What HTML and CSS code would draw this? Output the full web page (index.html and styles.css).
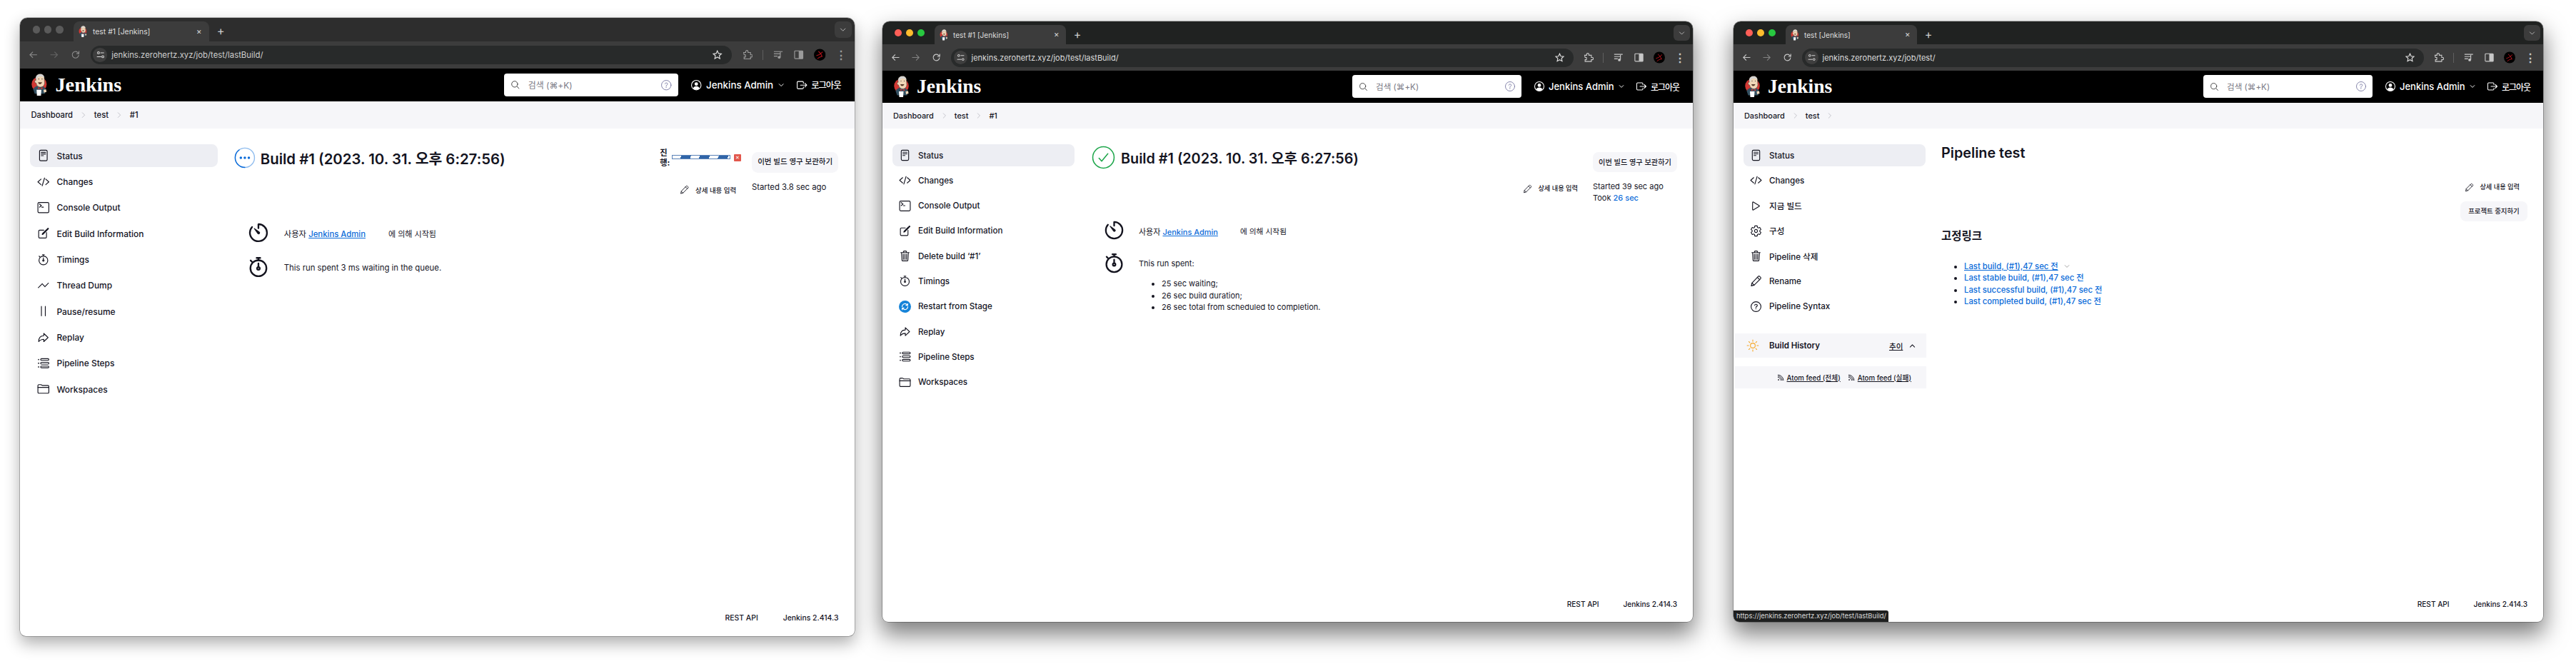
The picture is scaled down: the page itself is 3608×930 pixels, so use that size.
FILE: index.html
```html
<!DOCTYPE html>
<html lang="ko">
<head>
<meta charset="utf-8">
<title>Jenkins</title>
<link rel="stylesheet" href="styles.css">
</head>
<body>
<svg class="defs" xmlns="http://www.w3.org/2000/svg" aria-hidden="true">
  <symbol id="logo" viewBox="0 0 44 62">
    <circle cx="21" cy="29" r="20.5" fill="#d33833"/>
    <path d="M5 43c3-7 9-10 17-10s14 3 17 10l-2 12H9z" fill="#335061"/>
    <path d="M12 10c1-6 6-9 12-9s11 4 11 11c0 5 1 9 1 13 0 7-5 12-11 12S14 33 13 26c-3 0-4-3-4-5s2-3 3-2z" fill="#f0d6b7" stroke="#3a3a3a" stroke-width="1"/>
    <path d="M12 13c0-7 6-11 12-11s11 4 11 10c-3-4-8-5-13-4-3 1-5 2-6 5l-1 5z" fill="#d5d5d5"/>
    <path d="M18 24h11c-1 3-3 5-6 5s-4-2-5-5z" fill="#5b3b2a"/>
    <circle cx="20" cy="15" r="1.2" fill="#222"/><circle cx="29" cy="15" r="1.2" fill="#222"/>
    <path d="M18 37l6 3 6-3v6l-6-3-6 3z" fill="#d33833"/>
    <path d="M14 44h13l-1 16H15z" fill="#fff"/>
    <path d="M33 44l7-1 1 7-7 2z" fill="#f0d6b7"/>
  </symbol>
  <symbol id="i-doc" viewBox="0 0 512 512"><rect x="100" y="40" width="312" height="432" rx="48"/><path d="M168 128h176M168 196h176M168 264h88"/></symbol>
  <symbol id="i-code" viewBox="0 0 512 512"><path d="M160 368L32 256l128-112M352 368l128-112-128-112M304 96l-96 320"/></symbol>
  <symbol id="i-term" viewBox="0 0 512 512"><rect x="32" y="48" width="448" height="416" rx="48"/><path d="M96 112l80 64-80 64M192 240h64"/></symbol>
  <symbol id="i-edit" viewBox="0 0 512 512"><path d="M384 224v184a40 40 0 01-40 40H104a40 40 0 01-40-40V168a40 40 0 0140-40h167.48"/><path d="M459.94 53.25a16.06 16.06 0 00-23.22-.56L424.35 65a8 8 0 000 11.31l11.34 11.32a8 8 0 0011.34 0l12.06-12c6.1-6.09 6.67-16.01.85-22.38zM399.34 90L218.82 270.2a9 9 0 00-2.31 3.93L208.16 299a3.91 3.91 0 004.86 4.86l24.85-8.35a9 9 0 003.93-2.31L422 112.66a9 9 0 000-12.66l-9.95-10a9.06 9.06 0 00-12.71 0z"/></symbol>
  <symbol id="i-watch" viewBox="0 0 512 512"><circle cx="256" cy="284" r="180"/><path d="M256 104V60M216 52h80M112 140l-30-30"/><path d="M256 176v80"/><circle cx="256" cy="288" r="30"/></symbol>
  <symbol id="i-timer" viewBox="0 0 512 512"><path d="M112.91 128A191.85 191.85 0 0064 254c-1.18 106.35 85.65 193.8 192 194 106.2.2 192-85.83 192-192 0-104.54-83.55-189.61-187.5-192a4.36 4.36 0 00-4.5 4.37V152"/><path class="solid" d="M233.38 278.63l-79-113a8.13 8.13 0 0111.32-11.32l113 79a32.5 32.5 0 01-37.25 53.26 33.21 33.21 0 01-8-7.94z"/></symbol>
  <symbol id="i-thread" viewBox="0 0 512 512"><path d="M344 280l88-88M232 216l64 64M80 320l104-104"/><g class="solid"><circle cx="456" cy="168" r="24"/><circle cx="320" cy="304" r="24"/><circle cx="208" cy="192" r="24"/><circle cx="56" cy="344" r="24"/></g></symbol>
  <symbol id="i-pause" viewBox="0 0 512 512"><path d="M176 64v384M336 64v384"/></symbol>
  <symbol id="i-replay" viewBox="0 0 512 512"><path d="M448 256L272 88v96C103.57 184 64 304.77 64 424c48.61-62.24 91.6-96 208-96v96z"/></symbol>
  <symbol id="i-steps" viewBox="0 0 512 512"><g class="solid"><circle cx="60" cy="104" r="26"/><circle cx="60" cy="256" r="26"/><circle cx="60" cy="408" r="26"/></g><rect x="144" y="68" width="336" height="72" rx="36"/><rect x="144" y="220" width="336" height="72" rx="36"/><rect x="144" y="372" width="336" height="72" rx="36"/></symbol>
  <symbol id="i-folder" viewBox="0 0 512 512"><path d="M440 432H72a40 40 0 01-40-40V120a40 40 0 0140-40h75.89a40 40 0 0122.19 6.72l27.84 18.56a40 40 0 0022.19 6.72H440a40 40 0 0140 40v240a40 40 0 01-40 40z"/><path d="M32 192h448"/></symbol>
  <symbol id="i-trash" viewBox="0 0 512 512"><path d="M112 112l20 320c.95 18.49 14.4 32 32 32h184c17.67 0 30.87-13.51 32-32l20-320M80 112h352M192 112V72a23.93 23.93 0 0124-24h80a23.93 23.93 0 0124 24v40M256 176v224M184 176l8 224M328 176l-8 224"/></symbol>
  <symbol id="i-play" viewBox="0 0 512 512"><path d="M112 111v290c0 17.44 17 28.52 31 20.16l247.9-148.37c12.12-7.25 12.12-26.33 0-33.58L143 90.84c-14-8.36-31 2.72-31 20.16z"/></symbol>
  <symbol id="i-gear" viewBox="0 0 512 512"><path d="M262.29 192.31a64 64 0 1057.4 57.4 64.13 64.13 0 00-57.4-57.4zM416.39 256a154.34 154.34 0 01-1.53 20.79l45.21 35.46a10.81 10.81 0 012.45 13.75l-42.77 74a10.81 10.81 0 01-13.14 4.59l-44.9-18.08a16.11 16.11 0 00-15.17 1.75A164.48 164.48 0 01325 400.8a15.94 15.94 0 00-8.82 12.14l-6.73 47.89a11.08 11.08 0 01-10.68 9.17h-85.54a11.11 11.11 0 01-10.69-8.87l-6.72-47.82a16.07 16.07 0 00-9-12.22 155.3 155.3 0 01-21.46-12.57 16 16 0 00-15.11-1.71l-44.89 18.07a10.81 10.81 0 01-13.14-4.58l-42.77-74a10.8 10.8 0 012.45-13.75l38.21-30a16.05 16.05 0 006-14.08c-.36-4.17-.58-8.33-.58-12.5s.21-8.27.58-12.35a16 16 0 00-6.07-13.94l-38.19-30A10.81 10.81 0 0149.48 186l42.77-74a10.81 10.81 0 0113.14-4.59l44.9 18.08a16.11 16.11 0 0015.17-1.75A164.48 164.48 0 01187 111.2a15.94 15.94 0 008.82-12.14l6.73-47.89A11.08 11.08 0 01213.23 42h85.54a11.11 11.11 0 0110.69 8.87l6.72 47.82a16.07 16.07 0 009 12.22 155.3 155.3 0 0121.46 12.57 16 16 0 0015.11 1.71l44.89-18.07a10.81 10.81 0 0113.14 4.58l42.77 74a10.8 10.8 0 01-2.45 13.75l-38.21 30a16.05 16.05 0 00-6.05 14.08c.33 4.14.55 8.3.55 12.47z"/></symbol>
  <symbol id="i-pencil" viewBox="0 0 512 512"><path d="M352 64a40 40 0 0156 0l40 40a40 40 0 010 56L176 432 56 464l32-120z"/><path d="M312 104l96 96M88 344l88 88"/></symbol>
  <symbol id="i-help" viewBox="0 0 512 512"><circle cx="256" cy="256" r="208"/><path d="M200 202.29s.84-17.5 19.57-32.57C230.68 160.77 244 158.18 256 158c10.93-.14 20.69 1.67 26.53 4.45 10 4.76 29.47 16.38 29.47 41.09 0 26-17 37.81-36.37 50.8S251 281.43 251 296"/><circle class="solid" cx="250" cy="348" r="20"/></symbol>
  <symbol id="i-logout" viewBox="0 0 512 512"><path d="M320 176v-40a40 40 0 00-40-40H88a40 40 0 00-40 40v240a40 40 0 0040 40h192a40 40 0 0040-40v-40M384 176l80 80-80 80M191 256h273"/></symbol>
  <symbol id="i-user" viewBox="0 0 512 512"><circle cx="256" cy="256" r="208"/><circle class="solid" cx="256" cy="206" r="76"/><path class="solid" d="M116 396c20-60 76-90 140-90s120 30 140 90c-36 40-86 60-140 60s-104-20-140-60z"/></symbol>
  <symbol id="i-search" viewBox="0 0 512 512"><circle cx="224" cy="224" r="160"/><path d="M344 344l112 112"/></symbol>
  <symbol id="i-down" viewBox="0 0 512 512"><path d="M112 184l144 144 144-144"/></symbol>
  <symbol id="i-up" viewBox="0 0 512 512"><path d="M112 328l144-144 144 144"/></symbol>
  <symbol id="i-right" viewBox="0 0 512 512"><path d="M184 72l184 184-184 184"/></symbol>
  <symbol id="i-check" viewBox="0 0 512 512"><circle cx="256" cy="256" r="232"/><path d="M352 176L217.6 336 160 272"/></symbol>
  <symbol id="i-run" viewBox="0 0 512 512"><circle class="run-track" cx="256" cy="256" r="232"/><path class="run-arc" d="M256 488A232 232 0 0124 256 232 232 0 01120 68"/><g class="run-dots"><circle cx="160" cy="256" r="30"/><circle cx="256" cy="256" r="30"/><circle cx="352" cy="256" r="30"/></g></symbol>
  <symbol id="i-restart" viewBox="0 0 512 512"><circle class="restart-bg" cx="256" cy="256" r="256"/><path class="restart-fg" d="M136 256a120 120 0 01204-86l30 30M376 256a120 120 0 01-204 86l-30-30M372 130v72h-72M140 382v-72h72"/></symbol>
  <symbol id="i-sun" viewBox="0 0 512 512"><circle cx="256" cy="256" r="96"/><path d="M256 32v60M256 420v60M32 256h60M420 256h60M98 98l40 40M374 374l40 40M98 414l40-40M374 138l40-40"/></symbol>
  <symbol id="i-rss" viewBox="0 0 512 512"><circle class="solid" cx="96" cy="416" r="40"/><path d="M64 256a192 192 0 01192 192M64 96a352 352 0 01352 352M64 176a272 272 0 01272 272"/></symbol>
  <symbol id="c-back" viewBox="0 0 24 24"><path d="M20 12H5M11 5.5L4.5 12l6.5 6.5"/></symbol>
  <symbol id="c-fwd" viewBox="0 0 24 24"><path d="M4 12h15M13 5.5l6.5 6.5-6.500 6.500"/></symbol>
  <symbol id="c-reload" viewBox="0 0 24 24"><path d="M19 12a7 7 0 11-2.200-5.100L19.500 9.500M19.500 4v5.500H14"/></symbol>
  <symbol id="c-tune" viewBox="0 0 24 24"><circle cx="7" cy="7" r="2.500"/><path d="M12 7h9M3 17h11"/><circle cx="18" cy="17" r="2.500"/></symbol>
  <symbol id="c-star" viewBox="0 0 24 24"><path d="M12 3.500l2.600 5.700 6.200.700-4.600 4.200 1.300 6.100-5.500-3.100-5.500 3.100 1.300-6.100-4.600-4.200 6.200-.700z"/></symbol>
  <symbol id="c-ext" viewBox="0 0 24 24"><path d="M4 7h4.500V5a2.500 2.500 0 015 0v2H19v5h2a2.500 2.500 0 010 5h-2v4H5v-4h3v-5H5z"/></symbol>
  <symbol id="c-media" viewBox="0 0 24 24"><path d="M3 5h14M3 10h14M3 15h8M17 6v11"/><circle class="solid" cx="14.500" cy="17.500" r="3"/><path d="M17 5h5"/></symbol>
  <symbol id="c-side" viewBox="0 0 24 24"><rect x="3" y="3.500" width="18" height="17" rx="1.500"/><rect class="solid" x="12" y="3.500" width="9" height="17"/></symbol>
  <symbol id="c-avatar" viewBox="0 0 24 24"><circle class="av-bg" cx="12" cy="12" r="12"/><path class="av-fg" d="M5 14c4-1 9-4 13-8M9 5c3 2 6 6 8 11M7 20c3-3 6-4 10-5"/></symbol>
</svg>

<main class="desk">

<!-- Window 1: running build, unfocused -->
<section class="win win-a">
  <div class="strip">
    <div class="lights"><i class="light"></i><i class="light"></i><i class="light"></i></div>
    <div class="tab"><svg class="fav"><use href="#logo"/></svg><span class="tab-title">test #1 [Jenkins]</span><span class="tab-x">✕</span></div>
    <span class="tab-new">+</span>
    <span class="tab-menu"><svg class="ic ic-tm"><use href="#i-down"/></svg></span>
  </div>
  <div class="toolbar">
    <span class="nav"><svg class="chr"><use href="#c-back"/></svg></span>
    <span class="nav off"><svg class="chr"><use href="#c-fwd"/></svg></span>
    <span class="nav"><svg class="chr"><use href="#c-reload"/></svg></span>
    <div class="omni"><span class="tune"><svg class="chr chr-s"><use href="#c-tune"/></svg></span><span class="url">jenkins.zerohertz.xyz/job/test/lastBuild/</span><svg class="chr star"><use href="#c-star"/></svg></div>
    <span class="tb ext"><svg class="chr"><use href="#c-ext"/></svg></span><span class="sep"></span>
    <span class="tb"><svg class="chr"><use href="#c-media"/></svg></span>
    <span class="tb"><svg class="chr"><use href="#c-side"/></svg></span>
    <span class="tb"><svg class="avatar"><use href="#c-avatar"/></svg></span>
    <span class="tb dots">⋮</span>
  </div>
  <header class="jhead">
    <svg class="logo"><use href="#logo"/></svg><span class="brand">Jenkins</span>
    <div class="search"><svg class="ic ic-s"><use href="#i-search"/></svg><span class="ph">검색 (⌘+K)</span><svg class="ic ic-q"><use href="#i-help"/></svg></div>
    <svg class="ic ic-u"><use href="#i-user"/></svg><span class="uname">Jenkins Admin</span><svg class="ic ic-d"><use href="#i-down"/></svg>
    <svg class="ic ic-l"><use href="#i-logout"/></svg><span class="lout">로그아웃</span>
  </header>
  <nav class="crumbs"><span>Dashboard</span><svg class="ic cr"><use href="#i-right"/></svg><span>test</span><svg class="ic cr"><use href="#i-right"/></svg><span>#1</span></nav>
  <div class="page">
    <aside class="side">
      <ul class="tasks">
        <li class="task on"><svg class="ic"><use href="#i-doc"/></svg>Status</li>
        <li class="task"><svg class="ic"><use href="#i-code"/></svg>Changes</li>
        <li class="task"><svg class="ic"><use href="#i-term"/></svg>Console Output</li>
        <li class="task"><svg class="ic"><use href="#i-edit"/></svg>Edit Build Information</li>
        <li class="task"><svg class="ic"><use href="#i-watch"/></svg>Timings</li>
        <li class="task"><svg class="ic"><use href="#i-thread"/></svg>Thread Dump</li>
        <li class="task"><svg class="ic"><use href="#i-pause"/></svg>Pause/resume</li>
        <li class="task"><svg class="ic"><use href="#i-replay"/></svg>Replay</li>
        <li class="task"><svg class="ic"><use href="#i-steps"/></svg>Pipeline Steps</li>
        <li class="task"><svg class="ic"><use href="#i-folder"/></svg>Workspaces</li>
      </ul>
    </aside>
    <div class="content">
      <div class="head">
        <h1 class="title"><svg class="ic st st-run"><use href="#i-run"/></svg>Build #1 (2023. 10. 31. 오후 6:27:56)</h1>
        <div class="meta">
          <div class="prog"><span class="prog-l">진행:</span><span class="bar"></span><span class="stop">✕</span></div>
          <span class="keep">이번 빌드 영구 보관하기</span>
          <span class="desc"><svg class="ic ic-p"><use href="#i-pencil"/></svg>상세 내용 입력</span>
          <div class="times"><div>Started 3.8 sec ago</div></div>
        </div>
      </div>
      <div class="info"><svg class="ic big"><use href="#i-timer"/></svg><span>사용자 <a class="lnk">Jenkins Admin</a></span><span class="by">에 의해 시작됨</span></div>
      <div class="info info-2"><svg class="ic big"><use href="#i-watch"/></svg><span>This run spent 3 ms waiting in the queue.</span></div>
    </div>
  </div>
  <footer class="foot"><span>REST API</span><span>Jenkins 2.414.3</span></footer>
</section>

<!-- Window 2: finished build -->
<section class="win win-b act">
  <div class="strip">
    <div class="lights"><i class="light r"></i><i class="light y"></i><i class="light g"></i></div>
    <div class="tab"><svg class="fav"><use href="#logo"/></svg><span class="tab-title">test #1 [Jenkins]</span><span class="tab-x">✕</span></div>
    <span class="tab-new">+</span>
    <span class="tab-menu"><svg class="ic ic-tm"><use href="#i-down"/></svg></span>
  </div>
  <div class="toolbar">
    <span class="nav"><svg class="chr"><use href="#c-back"/></svg></span>
    <span class="nav off"><svg class="chr"><use href="#c-fwd"/></svg></span>
    <span class="nav"><svg class="chr"><use href="#c-reload"/></svg></span>
    <div class="omni"><span class="tune"><svg class="chr chr-s"><use href="#c-tune"/></svg></span><span class="url">jenkins.zerohertz.xyz/job/test/lastBuild/</span><svg class="chr star"><use href="#c-star"/></svg></div>
    <span class="tb ext"><svg class="chr"><use href="#c-ext"/></svg></span><span class="sep"></span>
    <span class="tb"><svg class="chr"><use href="#c-media"/></svg></span>
    <span class="tb"><svg class="chr"><use href="#c-side"/></svg></span>
    <span class="tb"><svg class="avatar"><use href="#c-avatar"/></svg></span>
    <span class="tb dots">⋮</span>
  </div>
  <header class="jhead">
    <svg class="logo"><use href="#logo"/></svg><span class="brand">Jenkins</span>
    <div class="search"><svg class="ic ic-s"><use href="#i-search"/></svg><span class="ph">검색 (⌘+K)</span><svg class="ic ic-q"><use href="#i-help"/></svg></div>
    <svg class="ic ic-u"><use href="#i-user"/></svg><span class="uname">Jenkins Admin</span><svg class="ic ic-d"><use href="#i-down"/></svg>
    <svg class="ic ic-l"><use href="#i-logout"/></svg><span class="lout">로그아웃</span>
  </header>
  <nav class="crumbs"><span>Dashboard</span><svg class="ic cr"><use href="#i-right"/></svg><span>test</span><svg class="ic cr"><use href="#i-right"/></svg><span>#1</span></nav>
  <div class="page">
    <aside class="side">
      <ul class="tasks">
        <li class="task on"><svg class="ic"><use href="#i-doc"/></svg>Status</li>
        <li class="task"><svg class="ic"><use href="#i-code"/></svg>Changes</li>
        <li class="task"><svg class="ic"><use href="#i-term"/></svg>Console Output</li>
        <li class="task"><svg class="ic"><use href="#i-edit"/></svg>Edit Build Information</li>
        <li class="task"><svg class="ic"><use href="#i-trash"/></svg>Delete build ‘#1’</li>
        <li class="task"><svg class="ic"><use href="#i-watch"/></svg>Timings</li>
        <li class="task"><svg class="ic ic-fill"><use href="#i-restart"/></svg>Restart from Stage</li>
        <li class="task"><svg class="ic"><use href="#i-replay"/></svg>Replay</li>
        <li class="task"><svg class="ic"><use href="#i-steps"/></svg>Pipeline Steps</li>
        <li class="task"><svg class="ic"><use href="#i-folder"/></svg>Workspaces</li>
      </ul>
    </aside>
    <div class="content">
      <div class="head">
        <h1 class="title"><svg class="ic st st-ok"><use href="#i-check"/></svg>Build #1 (2023. 10. 31. 오후 6:27:56)</h1>
        <div class="meta">
          <span class="meta-gap"></span>
          <span class="keep">이번 빌드 영구 보관하기</span>
          <span class="desc"><svg class="ic ic-p"><use href="#i-pencil"/></svg>상세 내용 입력</span>
          <div class="times"><div>Started 39 sec ago</div><div>Took <a class="lnk plain">26 sec</a></div></div>
        </div>
      </div>
      <div class="info"><svg class="ic big"><use href="#i-timer"/></svg><span>사용자 <a class="lnk">Jenkins Admin</a></span><span class="by">에 의해 시작됨</span></div>
      <div class="info info-2"><svg class="ic big"><use href="#i-watch"/></svg><div><div>This run spent:</div>
        <ul class="spent"><li>25 sec waiting;</li><li>26 sec build duration;</li><li>26 sec total from scheduled to completion.</li></ul></div></div>
    </div>
  </div>
  <footer class="foot"><span>REST API</span><span>Jenkins 2.414.3</span></footer>
</section>

<!-- Window 3: job page -->
<section class="win win-c act">
  <div class="strip">
    <div class="lights"><i class="light r"></i><i class="light y"></i><i class="light g"></i></div>
    <div class="tab"><svg class="fav"><use href="#logo"/></svg><span class="tab-title">test [Jenkins]</span><span class="tab-x">✕</span></div>
    <span class="tab-new">+</span>
    <span class="tab-menu"><svg class="ic ic-tm"><use href="#i-down"/></svg></span>
  </div>
  <div class="toolbar">
    <span class="nav"><svg class="chr"><use href="#c-back"/></svg></span>
    <span class="nav off"><svg class="chr"><use href="#c-fwd"/></svg></span>
    <span class="nav"><svg class="chr"><use href="#c-reload"/></svg></span>
    <div class="omni"><span class="tune"><svg class="chr chr-s"><use href="#c-tune"/></svg></span><span class="url">jenkins.zerohertz.xyz/job/test/</span><svg class="chr star"><use href="#c-star"/></svg></div>
    <span class="tb ext"><svg class="chr"><use href="#c-ext"/></svg></span><span class="sep"></span>
    <span class="tb"><svg class="chr"><use href="#c-media"/></svg></span>
    <span class="tb"><svg class="chr"><use href="#c-side"/></svg></span>
    <span class="tb"><svg class="avatar"><use href="#c-avatar"/></svg></span>
    <span class="tb dots">⋮</span>
  </div>
  <header class="jhead">
    <svg class="logo"><use href="#logo"/></svg><span class="brand">Jenkins</span>
    <div class="search"><svg class="ic ic-s"><use href="#i-search"/></svg><span class="ph">검색 (⌘+K)</span><svg class="ic ic-q"><use href="#i-help"/></svg></div>
    <svg class="ic ic-u"><use href="#i-user"/></svg><span class="uname">Jenkins Admin</span><svg class="ic ic-d"><use href="#i-down"/></svg>
    <svg class="ic ic-l"><use href="#i-logout"/></svg><span class="lout">로그아웃</span>
  </header>
  <nav class="crumbs"><span>Dashboard</span><svg class="ic cr"><use href="#i-right"/></svg><span>test</span><svg class="ic cr"><use href="#i-right"/></svg></nav>
  <div class="page">
    <aside class="side">
      <ul class="tasks">
        <li class="task on"><svg class="ic"><use href="#i-doc"/></svg>Status</li>
        <li class="task"><svg class="ic"><use href="#i-code"/></svg>Changes</li>
        <li class="task"><svg class="ic"><use href="#i-play"/></svg>지금 빌드</li>
        <li class="task"><svg class="ic"><use href="#i-gear"/></svg>구성</li>
        <li class="task"><svg class="ic"><use href="#i-trash"/></svg>Pipeline 삭제</li>
        <li class="task"><svg class="ic"><use href="#i-pencil"/></svg>Rename</li>
        <li class="task"><svg class="ic"><use href="#i-help"/></svg>Pipeline Syntax</li>
      </ul>
      <div class="hist">
        <svg class="ic ic-sun"><use href="#i-sun"/></svg><span class="hist-t">Build History</span><a class="trend">추이</a><svg class="ic ic-up"><use href="#i-up"/></svg>
      </div>
      <div class="feeds">
        <svg class="ic ic-rss"><use href="#i-rss"/></svg><a class="feed">Atom feed (전체)</a>
        <svg class="ic ic-rss"><use href="#i-rss"/></svg><a class="feed">Atom feed (실패)</a>
      </div>
    </aside>
    <div class="content">
      <div class="head head-job">
        <h1 class="title title-job">Pipeline test</h1>
        <div class="job-side">
          <span class="desc"><svg class="ic ic-p"><use href="#i-pencil"/></svg>상세 내용 입력</span>
          <span class="keep keep-job">프로젝트 중지하기</span>
        </div>
      </div>
      <h2 class="perma">고정링크</h2>
      <ul class="links">
        <li><a class="lnk hov">Last build, (#1),47 sec 전</a><svg class="ic ic-ld"><use href="#i-down"/></svg></li>
        <li><a class="lnk plain">Last stable build, (#1),47 sec 전</a></li>
        <li><a class="lnk plain">Last successful build, (#1),47 sec 전</a></li>
        <li><a class="lnk plain">Last completed build, (#1),47 sec 전</a></li>
      </ul>
    </div>
  </div>
  <footer class="foot"><span>REST API</span><span>Jenkins 2.414.3</span></footer>
  <div class="status-url">https://jenkins.zerohertz.xyz/job/test/lastBuild/</div>
</section>

</main>
</body>
</html>
```

FILE: styles.css
```css
* { box-sizing: border-box; }
html, body { margin: 0; padding: 0; background: #fff; }
body { width: 3608px; height: 930px; overflow: hidden; font-family: Inter, "Noto Sans CJK KR", sans-serif; color: #14141f; }
.defs { width: 0; height: 0; display: block; overflow: hidden; }
.desk { display: block; width: 3608px; height: 930px; position: relative; }

/* windows on the desktop */
.win { position: absolute; width: 1135px; height: 841px; display: flex; flex-direction: column; background: #fff; border-radius: 10px 10px 8px 8px; overflow: hidden; }
.win-a { left: 27.2px; top: 24.3px; zoom: 1.03; box-shadow: 0 0 0 .5px rgba(0,0,0,.45), 0 9px 22px rgba(0,0,0,.32); }
.win-b { left: 1236px; top: 30px; }
.win-c { left: 2428px; top: 30px; width: 1134px; }
.act { box-shadow: 0 0 0 .5px rgba(0,0,0,.5), 0 16px 32px 2px rgba(0,0,0,.5); }

/* browser chrome */
.strip { height: 32px; flex: none; display: flex; align-items: flex-end; background: #2d2d2d; position: relative; }
.act .strip { background: #202221; }
.lights { width: 73px; height: 32px; flex: none; display: flex; align-items: center; gap: 6px; padding-left: 17px; }
.light { width: 10px; height: 10px; border-radius: 50%; background: #5a5a5a; display: block; }
.light.r { background: #ff5f57; }
.light.y { background: #febc2e; }
.light.g { background: #28c840; }
.tab { width: 184px; height: 27px; display: flex; align-items: center; background: #3c3c3c; border-radius: 8px 8px 0 0; padding-left: 7px; color: #dedede; font-size: 10.1px; }
.fav { width: 12px; height: 16px; flex: none; margin-right: 7px; }
.tab-title { flex: 1; white-space: nowrap; }
.tab-x { width: 26px; text-align: center; font-size: 9px; color: #ddd; }
.tab-new { width: 32px; height: 27px; text-align: center; line-height: 27px; font-size: 16px; color: #ccc; }
.tab-menu { position: absolute; right: 4px; top: 5px; width: 23px; height: 22px; border-radius: 6px; background: #3c3c3c; display: flex; align-items: center; justify-content: center; }
.ic-tm { width: 11px; height: 11px; color: #ddd; stroke-width: 56; }
.toolbar { height: 37px; flex: none; display: flex; align-items: center; background: #3c3c3c; padding: 0 4px; color: #c7c7c7; }
.win-a .toolbar { color: #8a8a8a; }
.nav { width: 28.5px; flex: none; display: flex; justify-content: center; }
.nav.off { opacity: .5; }
.chr { width: 15px; height: 15px; fill: none; stroke: currentColor; stroke-width: 1.8; }
.chr .solid, .chr-s .solid { fill: currentColor; stroke: none; }
.chr-s { width: 13px; height: 13px; }
.omni { flex: 1; height: 26px; margin-left: 6.5px; background: #282a2a; border-radius: 13px; display: flex; align-items: center; padding: 0 12px 0 3.5px; }
.tune { width: 19px; height: 19px; border-radius: 50%; background: #3e3e3e; display: flex; align-items: center; justify-content: center; color: #ddd; }
.url { margin-left: 6px; flex: 1; font-size: 11px; color: #dcdcdc; white-space: nowrap; }
.win-a .url { color: #cfcfcf; }
.star { color: #e0e0e0; }
.tb { width: 28.7px; flex: none; display: flex; justify-content: center; color: #c7c7c7; }
.win-a .tb { color: #9a9a9a; }
.ext { margin-left: 7px; }
.sep { width: 1px; height: 14px; background: #5f5f5f; margin: 0 6px; flex: none; }
.avatar { width: 16px; height: 17px; }
.av-bg { fill: #000; }
.av-fg { fill: none; stroke: #b1121a; stroke-width: 1.5; }
.dots { font-size: 16px; line-height: 16px; font-weight: 700; }

/* Jenkins header */
.jhead { height: 44.5px; flex: none; display: flex; align-items: center; background: #000; padding: 0 16px; color: #fff; }
.logo { width: 22px; height: 31px; flex: none; }
.brand { margin-left: 10px; width: 610px; flex: none; font: 700 27.5px "Liberation Serif", serif; }
.search { width: 237px; height: 32px; flex: none; margin-right: 17px; background: #fff; border-radius: 4px; display: flex; align-items: center; color: #7a7a85; font-size: 11.6px; padding: 0 8px 0 9px; }
.ph { flex: 1; margin-left: 11px; }
.ic { fill: none; stroke: currentColor; stroke-width: 34; stroke-linecap: round; stroke-linejoin: round; flex: none; }
.ic .solid, .solid { fill: currentColor; stroke: none; }
.ic-s { width: 13px; height: 13px; color: #333; }
.ic-q { width: 16px; height: 16px; color: #6b6b99; stroke-width: 26; }
.ic-u { width: 16px; height: 16px; color: #fff; }
.uname { margin-left: 5px; font-size: 13px; font-weight: 500; white-space: nowrap; width: 90px; }
.ic-d { width: 10px; height: 10px; margin-left: 7px; stroke-width: 48; }
.ic-l { width: 16px; height: 16px; margin-left: 15px; }
.lout { margin-left: 5px; font-size: 12px; letter-spacing: -1px; font-weight: 500; white-space: nowrap; }

/* breadcrumb */
.crumbs { height: 36.5px; flex: none; display: flex; align-items: center; background: #f6f6f9; padding-left: 15px; font-size: 10.9px; font-weight: 450; }
.cr { width: 9px; height: 10px; margin: 0 10px; color: #9a9aa5; stroke-width: 30; }

/* page */
.page { flex: 1; display: flex; min-height: 0; }
.side { width: 269px; flex: none; padding: 22px 0 0 14px; }
.tasks { list-style: none; margin: 0; padding: 0; display: flex; flex-direction: column; gap: 4.3px; }
.task { height: 31px; display: flex; align-items: center; gap: 10px; padding-left: 9px; border-radius: 8px; font-size: 11.6px; font-weight: 450; white-space: nowrap; color: #14141f; }
.task.on { background: #edeef3; }
.task .ic { width: 17px; height: 17px; }
.restart-bg { fill: #1583d8; stroke: none; }
.restart-fg { stroke: #fff; stroke-width: 36; fill: none; }
.content { flex: 1; min-width: 0; margin-left: 22px; padding: 22px 22px 0 0; font-size: 11px; }

.head { height: 105px; display: flex; justify-content: space-between; align-items: flex-start; }
.title { margin: 2px 0 0; display: flex; align-items: center; height: 33px; font-size: 19.8px; font-weight: 600; white-space: nowrap; color: #14141f; }
.st { width: 33px; height: 33px; margin-left: 2px; margin-right: 8px; }
.st-ok { color: #1ea64b; stroke-width: 24; }
.st-run { width: 29px; height: 29px; margin: 0 7px 0 0; stroke-width: 24; }
.run-track { stroke: #8fbcee; }
.run-arc { stroke: #0b6bd9; }
.run-dots { fill: #0b6bd9; stroke: none; }
.meta { margin-top: 11px; display: grid; grid-template-columns: auto auto; column-gap: 14px; justify-items: end; align-items: start; }
.meta-gap { display: block; }
.prog { display: flex; align-items: flex-start; font-size: 11px; }
.prog-l { width: 14px; font-weight: 700; line-height: 13px; word-break: break-all; margin-top: -5px; margin-right: 2px; }
.bar { width: 80px; height: 6px; margin: 3px 0 0; border: 1px solid #5a82b8; background: repeating-linear-gradient(115deg, #fff 0 11px, #2f65a8 11px 23px); }
.stop { width: 10px; height: 10px; margin: 2px 0 0 5px; background: #e2574c; border-radius: 1px; color: #fff; font-size: 7px; line-height: 10px; text-align: center; }
.keep { display: block; width: 118px; height: 28px; line-height: 28px; text-align: center; background: #f6f6f9; border-radius: 8px; font-size: 10.2px; font-weight: 450; white-space: nowrap; justify-self: stretch; }
.desc { display: flex; align-items: center; gap: 8px; font-size: 9.2px; font-weight: 450; margin-top: 14.8px; margin-right: 7px; white-space: nowrap; line-height: 16.5px; }
.ic-p { width: 13px; height: 13px; }
.times { justify-self: start; margin-top: 11.5px; line-height: 16.5px; font-size: 11px; white-space: nowrap; }
.lnk { color: #0b6bd9; text-decoration: underline; font-weight: 500; }
.plain { text-decoration: none; }
.info { display: flex; align-items: flex-start; padding-left: 18px; line-height: 16.5px; font-size: 11px; }
.big { width: 31px; height: 31px; margin-right: 19px; stroke-width: 38; }
.info > span { margin-top: 9.5px; }
.info .by { margin-left: 31px; font-size: 10.7px; }
.info-2 { margin-top: 15px; }
.info-2 > div { margin-top: 8px; }
.spent { margin: 11.5px 0 0; padding: 0 0 0 32px; }
.spent li { line-height: 16.6px; }

/* job page */
.head-job { height: 117px; }
.title-job { margin: 0; height: 24px; line-height: 24px; }
.job-side { display: flex; flex-direction: column; align-items: flex-end; margin-top: 52px; }
.job-side .desc { margin: 0 11px 0 0; gap: 8px; }
.keep-job { width: 94px; margin-top: 11.5px; font-size: 9.4px; }
.perma { margin: 0; font-size: 15.5px; font-weight: 600; line-height: 24px; }
.links { margin: 21.7px 0 0; padding: 0 0 0 32px; font-size: 11.3px; line-height: 16.6px; }
.hov { text-decoration: underline; text-decoration-color: #0b6bd9; }
.ic-ld { width: 10px; height: 10px; margin-left: 7px; color: #777; vertical-align: -1px; }
.hist { margin: 22.5px 0 0 -12px; width: 268px; height: 34px; background: #f6f6f9; display: flex; align-items: center; padding-left: 16px; }
.ic-sun { width: 18px; height: 18px; color: #f5a623; stroke-width: 30; }
.hist-t { margin-left: 14px; width: 168px; flex: none; font-size: 11.5px; font-weight: 600; }
.trend { font-size: 10.5px; font-weight: 500; text-decoration: underline; }
.ic-up { width: 11px; height: 11px; margin-left: 8px; stroke-width: 50; }
.feeds { margin: 12px 0 0 -12px; width: 268px; height: 31px; background: #f6f6f9; display: flex; align-items: center; justify-content: flex-end; padding-right: 21px; font-size: 9.7px; font-weight: 500; }
.ic-rss { width: 11px; height: 11px; margin: 0 3px 0 10px; stroke-width: 40; }
.feed { text-decoration: underline; white-space: nowrap; }
.foot { height: 50px; flex: none; display: flex; justify-content: flex-end; gap: 34px; padding-right: 22px; font-size: 10.1px; font-weight: 500; align-items: center; }
.status-url { position: absolute; left: 0; bottom: 0; width: 217px; height: 16px; background: #1f2020; color: #d8d8d8; font-size: 9.5px; line-height: 16px; padding-left: 4px; border-radius: 0 3px 0 0; white-space: nowrap; overflow: hidden; }
```
